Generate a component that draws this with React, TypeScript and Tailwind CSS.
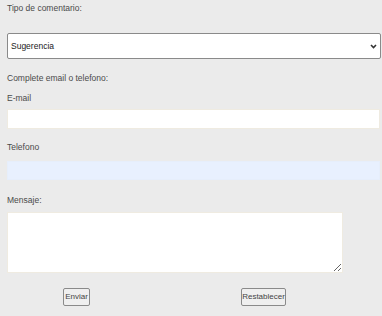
import { useState } from "react";

function App() {

const [tipo,setTipo] = useState("Sugerencia");
const [email,setEmail] = useState("");
const [telefono,setTelefono] = useState("");
const [mensaje,setMensaje] = useState("");

const reset = ()=>{
setTipo("Sugerencia");
setEmail("");
setTelefono("");
setMensaje("");
};

return(

<div className="bg-[#ebebeb] min-h-screen w-full text-[#4a4a4a] text-[8.5px] leading-[10px]" style={{fontFamily:'"Liberation Sans", Arial, sans-serif'}}>

<form
onSubmit={(e)=>e.preventDefault()}
className="flex flex-col pl-[7px] pr-[1px]"
>

<label className="block mt-[3px] h-[10px]">

Tipo de comentario:

</label>

<div className="relative mt-[20px] h-[26px]">

<select
value={tipo}
onChange={(e)=>setTipo(e.target.value)}
className="appearance-none w-full h-[26px] bg-white border border-[#8a8a8a] rounded-[2px] pl-[3px] text-[8.5px] text-[#222] outline-none"
>

<option>Sugerencia</option>
<option>Queja</option>
<option>Felicitación</option>

</select>

<svg
className="absolute right-[4px] top-[11px] pointer-events-none"
width="7"
height="5"
viewBox="0 0 7 5"
>
<path d="M1 1 L3.5 3.5 L6 1" fill="none" stroke="#333" strokeWidth="1.6"/>
</svg>

</div>

<p className="mt-[14px] h-[10px]">

Complete email o telefono:

</p>

<label className="block mt-[10px] h-[10px]">

E-mail

</label>

<input
type="email"
value={email}
onChange={(e)=>setEmail(e.target.value)}
className="mt-[6px] h-[20px] mr-[1px] bg-white border border-[#efebe1] outline-none text-[8.5px] px-[3px]"
/>

<label className="block mt-[13px] h-[10px]">

Telefono

</label>

<input
type="tel"
value={telefono}
onChange={(e)=>setTelefono(e.target.value)}
className="mt-[9px] h-[19px] mr-[1px] bg-[#e8f0fe] border border-[#e6eefb] outline-none text-[8.5px] px-[3px]"
/>

<label className="block mt-[15px] h-[10px]">

Mensaje:

</label>

<textarea
value={mensaje}
onChange={(e)=>setMensaje(e.target.value)}
className="mt-[7px] h-[61px] w-[336px] bg-white border border-[#efebe1] outline-none text-[8.5px] p-[3px]"
/>

<div className="flex flex-row mt-[15px] pl-[56px]">

<button
type="submit"
className="h-[18px] w-[27px] bg-[#efefef] border border-[#8a8a8a] rounded-[2px] text-[8px] font-normal text-[#444]"
>

Enviar

</button>

<button
type="button"
onClick={reset}
className="ml-[151px] h-[18px] w-[45px] bg-[#efefef] border border-[#8a8a8a] rounded-[2px] text-[8px] font-normal text-[#444]"
>

Restablecer

</button>

</div>

</form>

</div>

);

}

export default App;
